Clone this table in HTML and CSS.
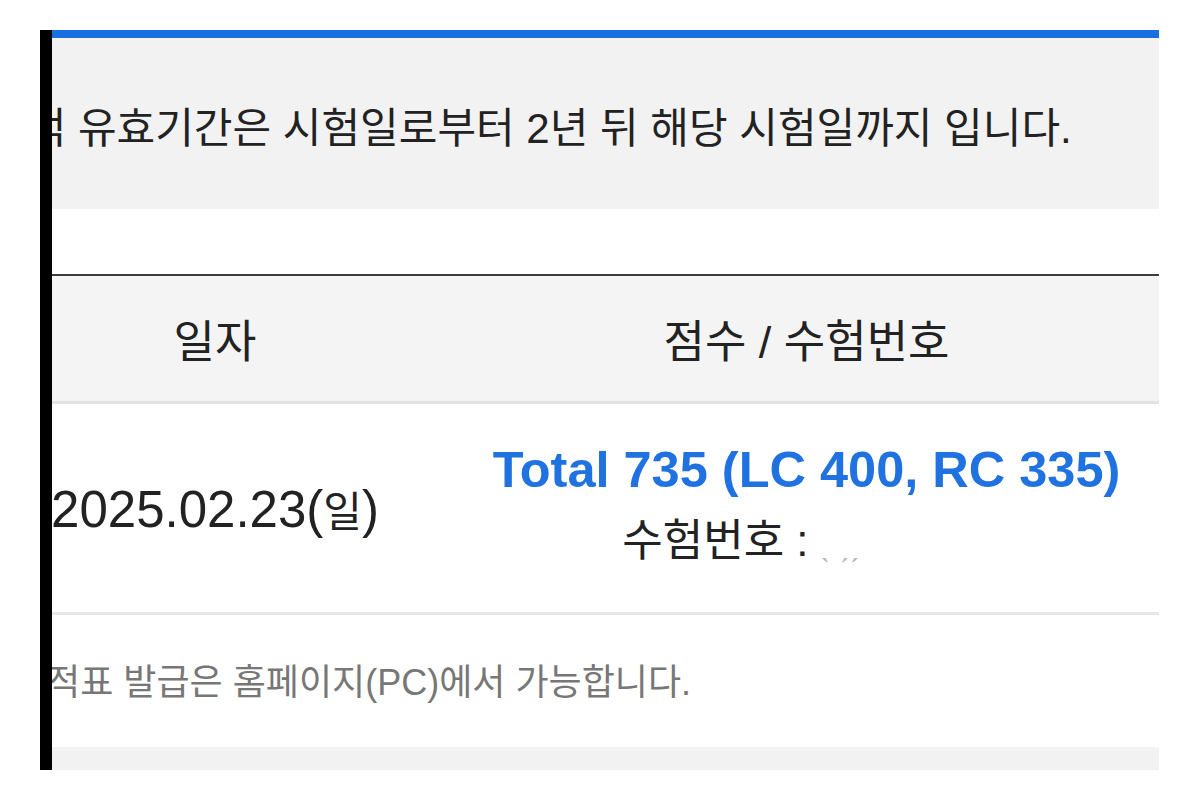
FILE: index.html
```html
<!DOCTYPE html>
<html lang="ko">
<head>
<meta charset="utf-8">
<title>성적 조회</title>
<link rel="stylesheet" href="styles.css">
</head>
<body>
<div class="frame">
  <div class="bar"></div>
  <div class="panel">
    <div class="inner">
      <div class="notice"><p>성적 유효기간은 시험일로부터 2년 뒤 해당 시험일까지 입니다.</p></div>
      <table class="scores">
        <thead>
          <tr><th class="col-date">일자</th><th class="col-score">점수 / 수험번호</th></tr>
        </thead>
        <tbody>
          <tr>
            <td class="date">2025.02.23(<span class="ko">일</span>)</td>
            <td class="score">
              <div class="total">Total 735 (LC 400, RC 335)</div>
              <div class="num">수험번호 : <span class="masked">ˎ ˏˏ</span></div>
            </td>
          </tr>
        </tbody>
      </table>
      <div class="note"><p>성적표 발급은 홈페이지(PC)에서 가능합니다.</p></div>
      <div class="foot"></div>
    </div>
  </div>
</div>
</body>
</html>
```
FILE: styles.css
```css
html, body {
  margin: 0;
  padding: 0;
  background: #fff;
}
body {
  font-family: "Liberation Sans", "Noto Sans CJK KR", sans-serif;
  color: #222;
}
p { margin: 0; }

.frame {
  display: flex;
  margin: 30px 41px 0 40px;
  height: 740px;
}
.bar {
  flex: none;
  width: 12px;
  background: #000;
}
.panel {
  flex: 1;
  overflow: hidden;
  border-top: 8px solid #1a6fe0;
}
.inner {
  margin-left: -76px;
  display: flex;
  flex-direction: column;
}

.notice {
  height: 171px;
  background: #f2f2f2;
  display: flex;
  align-items: center;
  padding-left: 13px;
  padding-top: 2px;
  box-sizing: border-box;
  font-size: 42px;
  color: #222;
  white-space: nowrap;
}

.scores {
  margin-top: 65px;
  width: 100%;
  table-layout: fixed;
  border-collapse: separate;
  border-spacing: 0;
  border-top: 2px solid #3d3d3d;
}
.col-date { width: 478px; }
.scores th {
  height: 125px;
  padding: 0;
  background: #f4f4f4;
  font-weight: normal;
  font-size: 45px;
  color: #222;
  border-bottom: 3px solid #e2e2e2;
  text-align: center;
  vertical-align: middle;
}
.scores td {
  height: 208px;
  padding: 0;
  border-bottom: 3px solid #e6e6e6;
  text-align: center;
  vertical-align: middle;
}
.date {
  font-size: 51px;
  color: #222;
}
.date .ko {
  font-size: 42px;
}
.total {
  font-size: 50.5px;
  font-weight: bold;
  color: #1f72e0;
  line-height: 70px;
}
.num {
  font-size: 44px;
  line-height: 72px;
  color: #222;
  white-space: nowrap;
}
.masked {
  display: inline-block;
  width: 170px;
  text-align: left;
  color: #b8b8b8;
  font-size: 30px;
}

.note {
  height: 132px;
  display: flex;
  align-items: center;
  padding-left: 38px;
  padding-bottom: 4px;
  box-sizing: border-box;
  font-size: 36px;
  color: #777;
  white-space: nowrap;
}
.foot {
  height: 23px;
  background: #f2f2f2;
}
```
